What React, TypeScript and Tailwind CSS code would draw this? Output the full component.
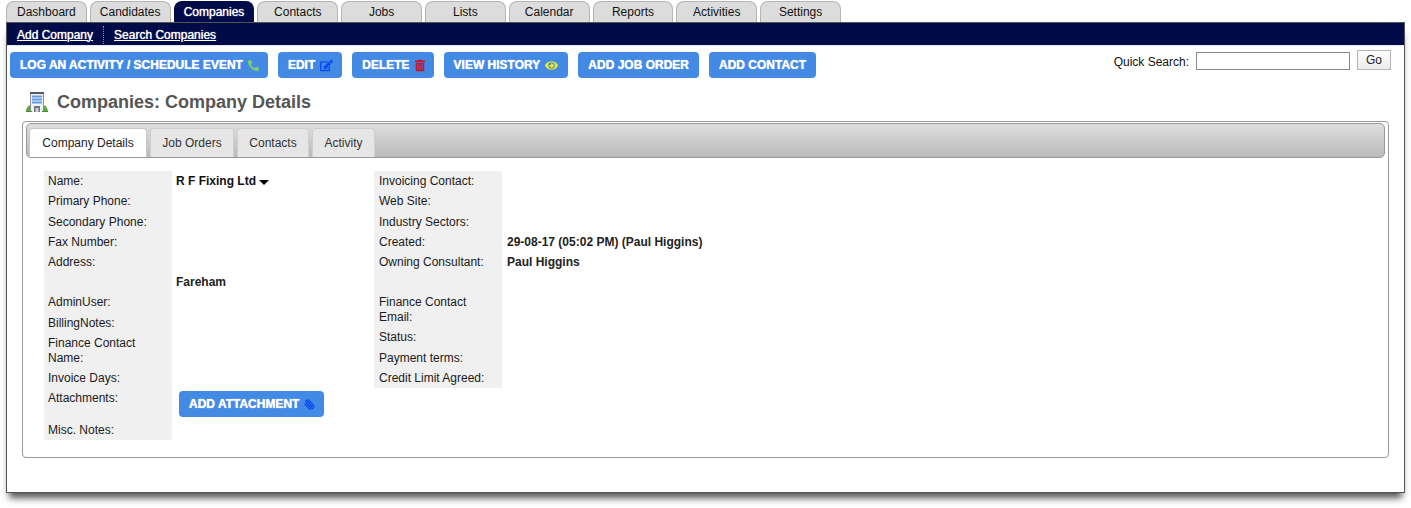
import type { ReactNode } from 'react';
import { Paperclip } from 'lucide-react';
import { FaEdit, FaEye, FaPhone, FaTrashAlt } from 'react-icons/fa';

const TABS = ['Dashboard', 'Candidates', 'Companies', 'Contacts', 'Jobs', 'Lists', 'Calendar', 'Reports', 'Activities', 'Settings'];
const SUB_TABS = ['Company Details', 'Job Orders', 'Contacts', 'Activity'];
const SUB_TAB_WIDTHS = ['w-[118px]', 'w-[84px]', 'w-[72px]', 'w-[63px]'];

const ActionButton = ({ children, icon }: { children: ReactNode; icon?: ReactNode }) => (
  <button className="flex h-[26px] items-center gap-[5px] rounded-[4px] bg-[#428ae4] px-[10px] text-[12px] font-bold text-white [text-shadow:0_0_1px_#fff]">
    {children}
    {icon}
  </button>
);

const Row = ({
  label,
  children,
  height = 'h-[20px]',
  pad = 'pl-[4px]',
}: {
  label: ReactNode;
  children?: ReactNode;
  height?: string;
  pad?: string;
}) => (
  <div className={`flex ${height}`}>
    <div className={`w-[128px] shrink-0 bg-[#f0f0f0] ${pad} pt-[3px] leading-[15px] text-[#1a1a1a]`}>{label}</div>
    <div className={`${pad} pt-[3px] font-bold leading-[15px] text-[#222]`}>{children}</div>
  </div>
);

const BuildingIcon = () => (
  <svg width="22" height="20" viewBox="0 0 22 20">
    <path d="M0 20 C0 16 2 15 3 13 C4 15 6 15 7 17 L7 20 Z" fill="#5fa63f" />
    <path d="M22 20 C22 16 20 15 19 13 C18 15 16 15 15 17 L15 20 Z" fill="#5fa63f" />
    <rect x="4" y="0" width="14" height="20" fill="#eef1f5" />
    <rect x="4" y="0" width="14" height="2" fill="#55585c" />
    <rect x="4" y="2" width="1" height="18" fill="#8d9298" />
    <rect x="17" y="2" width="1" height="18" fill="#8d9298" />
    <path d="M6 4.5H16M6 7.5H16M6 10.5H16" stroke="#5f9be8" strokeWidth="2" />
    <rect x="8" y="14" width="6" height="6" fill="#70757a" />
    <rect x="9.5" y="16" width="3" height="4" fill="#c9ced3" />
    <rect x="0" y="19" width="6" height="1" fill="#4a8a30" />
    <rect x="16" y="19" width="6" height="1" fill="#4a8a30" />
  </svg>
);

const App = () => {
  return (
    <div className="h-[508px] w-[1411px] overflow-hidden bg-white pl-[6px] pt-px font-['Liberation_Sans',Arial,sans-serif] text-[12px]">
      <div className="flex h-[21px] gap-[3px]">
        {TABS.map((tab) => (
          <div
            key={tab}
            className={
              tab === 'Companies'
                ? 'flex w-[80.8px] items-center justify-center rounded-t-[8px] bg-[#000b48] text-white [text-shadow:0_0_1px_#fff]'
                : 'flex w-[80.8px] items-center justify-center rounded-t-[8px] border border-b-0 border-[#b5b5b5] bg-[#dcdcdc] text-[#111]'
            }
          >
            {tab}
          </div>
        ))}
      </div>

      <div className="h-[471px] w-[1399px] border border-[#555] shadow-[0_8px_7px_-3px_#555]">
        <div className="flex h-[22px] items-center bg-[#000b48] pl-[10px] pt-px text-white [text-shadow:0_0_1px_#fff]">
          <a className="underline">Add Company</a>
          <div className="mx-[10px] h-[18px] border-l border-dotted border-[#8890b0]" />
          <a className="underline">Search Companies</a>
        </div>
        <div className="h-px bg-[#e4e7ee]" />

        <div className="flex items-start justify-between pl-[3px] pr-[13px] pt-[6px]">
          <div className="flex gap-[10px]">
            <ActionButton icon={<FaPhone className="-mr-px size-[11px] -scale-x-100 text-[#7fcf6a]" />}>LOG AN ACTIVITY / SCHEDULE EVENT</ActionButton>
            <ActionButton icon={<FaEdit className="-mr-px size-[13px] text-[#0b4cf0]" />}>EDIT</ActionButton>
            <ActionButton icon={<FaTrashAlt className="-mr-px h-[13px] w-[10px] text-[#c8102a]" />}>DELETE</ActionButton>
            <ActionButton icon={<FaEye className="size-[13px] text-[#eeee22]" />}>VIEW HISTORY</ActionButton>
            <ActionButton>ADD JOB ORDER</ActionButton>
            <ActionButton>ADD CONTACT</ActionButton>
          </div>
          <div className="flex items-start">
            <span className="mr-[7px] mt-[1px] text-[#111]">Quick Search:</span>
            <input className="mr-[7px] h-[18px] w-[154px] border border-[#888] bg-white" />
            <button className="-mt-[2px] h-[20px] w-[34px] border border-[#b5b5b5] bg-gradient-to-b from-white to-[#ececec] text-[#222]">Go</button>
          </div>
        </div>

        <div className="mt-[12px] flex h-[24px] items-center gap-[9px] pl-[19px]">
          <BuildingIcon />
          <h1 className="text-[18px] font-bold text-[#555]">Companies: Company Details</h1>
        </div>

        <div className="ml-[15px] mt-[7px] h-[337px] w-[1367px] rounded-[4px] border border-[#999] px-px pt-px">
          <div className="mx-[2px] flex h-[35px] gap-[3px] rounded-[5px] border border-[#999] bg-gradient-to-b from-[#dedede] to-[#bbbbbb] pl-[2px] pt-[4px]">
            {SUB_TABS.map((tab, i) => (
              <div
                key={tab}
                className={
                  i === 0
                    ? `flex ${SUB_TAB_WIDTHS[i]} items-center justify-center rounded-t-[4px] border border-b-0 border-[#c8c8c8] bg-white text-[#222]`
                    : `flex ${SUB_TAB_WIDTHS[i]} items-center justify-center rounded-t-[4px] border border-b-0 border-[#cfcfcf] bg-[#e6e6e6] text-[#333]`
                }
              >
                {tab}
              </div>
            ))}
          </div>

          <div className="ml-[20px] mt-[13px] flex">
            <div className="w-[330px]">
              <Row label="Name:">
                <span className="inline-flex items-center gap-[3px] text-[#111]">
                  R F Fixing Ltd
                  <span className="mt-[2px] border-x-[5px] border-t-[5px] border-x-transparent border-t-black" />
                </span>
              </Row>
              <Row label="Primary Phone:" height="h-[21px]" />
              <Row label="Secondary Phone:" />
              <Row label="Fax Number:" />
              <Row label="Address:" />
              <Row label="">Fareham</Row>
              <Row label="AdminUser:" height="h-[21px]" />
              <Row label="BillingNotes:" />
              <Row label="Finance Contact Name:" height="h-[35px]" />
              <Row label="Invoice Days:" />
              <div className="flex h-[32px]">
                <div className="w-[128px] shrink-0 bg-[#f0f0f0] pl-[4px] pt-[3px] leading-[15px] text-[#1a1a1a]">Attachments:</div>
                <div className="pl-[7px] pt-[3px]">
                  <ActionButton icon={<Paperclip strokeWidth={3} className="-mr-px size-[11px] -scale-x-100 text-[#0b4cf0]" />}>ADD ATTACHMENT</ActionButton>
                </div>
              </div>
              <Row label="Misc. Notes:" />
            </div>

            <div>
              <Row pad="pl-[5px]" label="Invoicing Contact:" />
              <Row pad="pl-[5px]" label="Web Site:" height="h-[21px]" />
              <Row pad="pl-[5px]" label="Industry Sectors:" />
              <Row pad="pl-[5px]" label="Created:">29-08-17 (05:02 PM) (Paul Higgins)</Row>
              <Row pad="pl-[5px]" label="Owning Consultant:">Paul Higgins</Row>
              <Row pad="pl-[5px]" label="" />
              <Row pad="pl-[5px]" label="Finance Contact Email:" height="h-[35px]" />
              <Row pad="pl-[5px]" label="Status:" height="h-[21px]" />
              <Row pad="pl-[5px]" label="Payment terms:" />
              <Row pad="pl-[5px]" label="Credit Limit Agreed:" />
            </div>
          </div>
        </div>
      </div>
    </div>
  );
};

export default App;
